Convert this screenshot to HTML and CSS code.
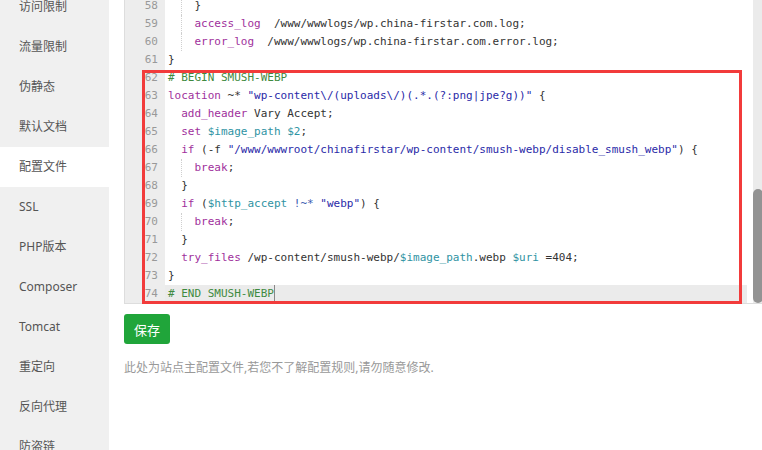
FILE: index.html
```html
<!DOCTYPE html>
<html lang="zh-CN">
<head>
  <meta charset="UTF-8" />
  <meta name="viewport" content="width=device-width, initial-scale=1.0" />
  <title>配置文件</title>
  <link rel="stylesheet" href="styles.css">
</head>
<body>
  <div class="layout">
    <!-- Site settings menu -->
    <aside class="side">
      <ul class="side-menu">
        <li>访问限制</li>
        <li>流量限制</li>
        <li>伪静态</li>
        <li>默认文档</li>
        <li class="active">配置文件</li>
        <li>SSL</li>
        <li>PHP版本</li>
        <li>Composer</li>
        <li>Tomcat</li>
        <li>重定向</li>
        <li>反向代理</li>
        <li>防盗链</li>
      </ul>
    </aside>

    <main class="content">
      <div class="editor">
        <div class="lines">
          <div class="line"><span class="ln">58</span><span class="lc">  <i class="ig"></i>  }</span></div>
          <div class="line"><span class="ln">59</span><span class="lc">  <i class="ig"></i>  <span class="kw">access_log</span>  /www/wwwlogs/wp.china-firstar.com.log;</span></div>
          <div class="line"><span class="ln">60</span><span class="lc">  <i class="ig"></i>  <span class="kw">error_log</span>  /www/wwwlogs/wp.china-firstar.com.error.log;</span></div>
          <div class="line"><span class="ln">61</span><span class="lc">}</span></div>
          <div class="line"><span class="ln">62</span><span class="lc"><span class="cm"># BEGIN SMUSH-WEBP</span></span></div>
          <div class="line"><span class="ln">63</span><span class="lc"><span class="kw">location</span> ~* <span class="str">"wp-content\/(uploads\/)(.*.(?:png|jpe?g))"</span> {</span></div>
          <div class="line"><span class="ln">64</span><span class="lc">  <span class="kw">add_header</span> Vary Accept;</span></div>
          <div class="line"><span class="ln">65</span><span class="lc">  <span class="kw">set</span> <span class="var">$image_path</span> <span class="var">$2</span>;</span></div>
          <div class="line"><span class="ln">66</span><span class="lc">  <span class="kw">if</span> (-f <span class="str">"/www/wwwroot/chinafirstar/wp-content/smush-webp/disable_smush_webp"</span>) {</span></div>
          <div class="line"><span class="ln">67</span><span class="lc">  <i class="ig"></i>  <span class="kw">break</span>;</span></div>
          <div class="line"><span class="ln">68</span><span class="lc">  }</span></div>
          <div class="line"><span class="ln">69</span><span class="lc">  <span class="kw">if</span> (<span class="var">$http_accept</span> <span class="op">!~*</span> <span class="str">"webp"</span>) {</span></div>
          <div class="line"><span class="ln">70</span><span class="lc">  <i class="ig"></i>  <span class="kw">break</span>;</span></div>
          <div class="line"><span class="ln">71</span><span class="lc">  }</span></div>
          <div class="line"><span class="ln">72</span><span class="lc">  <span class="kw">try_files</span> /wp-content/smush-webp/<span class="var">$image_path</span>.webp <span class="var">$uri</span> =404;</span></div>
          <div class="line"><span class="ln">73</span><span class="lc">}</span></div>
          <div class="line active"><span class="ln">74</span><span class="lc"><span class="cm"># END SMUSH-WEBP</span><i class="cursor"></i></span></div>
        </div>
        <div class="scroll"><div class="thumb"></div></div>
        <!-- Highlight box drawn over the added block -->
        <div class="mark"></div>
      </div>

      <button class="btn-save">保存</button>
      <p class="tip">此处为站点主配置文件,若您不了解配置规则,请勿随意修改.</p>
    </main>
  </div>
</body>
</html>
```

FILE: styles.css
```css
/* Global Styles */
body {
  margin: 0;
  padding: 0;
  background: #fff;
  font-family: "Noto Sans", "Noto Sans CJK SC", sans-serif;
  overflow: hidden;
}
.layout {
  display: flex;
  height: 450px;
}

/* Side menu */
.side {
  width: 109px;
  flex-shrink: 0;
  background: #f0f0f0;
  overflow: hidden;
}
.side-menu {
  list-style: none;
  margin: -13px 0 0;
  padding: 0;
}
.side-menu li {
  height: 40px;
  line-height: 40px;
  padding-left: 19px;
  font-size: 12px;
  color: #555;
}
.side-menu li.active {
  background: #fff;
}

/* Main area */
.content {
  flex: 1;
  padding-left: 15px;
  min-width: 0;
}

/* Code editor */
.editor {
  position: relative;
  display: flex;
  margin: -4px -2px 0 0;
  border: 1px solid #ddd;
  background: #fff;
}
.lines {
  flex: 1;
  margin-right: 6px;
  font-family: "DejaVu Sans Mono", "Liberation Mono", monospace;
  font-size: 11px;
  color: #333;
}
.line {
  display: flex;
  height: 18px;
  line-height: 18px;
}
.ln {
  width: 33px;
  flex-shrink: 0;
  padding-right: 7px;
  text-align: right;
  color: #999;
  background: #ededed;
}
.lc {
  flex: 1;
  padding-left: 3px;
  white-space: pre;
}
.line.active .lc {
  background: #ebebeb;
}
.ig {
  display: inline-block;
  width: 0;
  height: 18px;
  vertical-align: top;
  border-left: 1px dotted #cfcfcf;
  margin-right: -1px;
}
.cursor {
  display: inline-block;
  width: 0;
  height: 17px;
  vertical-align: top;
  border-left: 1px solid #888;
}
.kw { color: #a0309c; }
.cm { color: #3f8a3f; }
.str { color: #2a2aa8; }
.var { color: #2f93a3; }
.op { color: #3a5cb0; }

/* Editor scrollbar */
.scroll {
  width: 10px;
  flex-shrink: 0;
  background: #ebebeb;
  position: relative;
}
.thumb {
  position: absolute;
  left: 0;
  right: 0;
  bottom: 0;
  height: 114px;
  background: #939393;
  border-radius: 5px;
}

/* Red annotation box */
.mark {
  position: absolute;
  left: 17px;
  top: 73px;
  width: 600px;
  height: 234px;
  box-sizing: border-box;
  border: 3px solid #f23b3b;
}

/* Save button */
.btn-save {
  display: block;
  margin-top: 10px;
  height: 30px;
  padding: 0 10px;
  border: none;
  border-radius: 3px;
  background-color: #20a53a;
  color: #fff;
  font-family: "Noto Sans CJK SC", sans-serif;
  font-size: 13px;
  cursor: pointer;
}
.tip {
  margin: 14px 0 0;
  font-size: 12px;
  line-height: 20px;
  color: #999;
}
```
